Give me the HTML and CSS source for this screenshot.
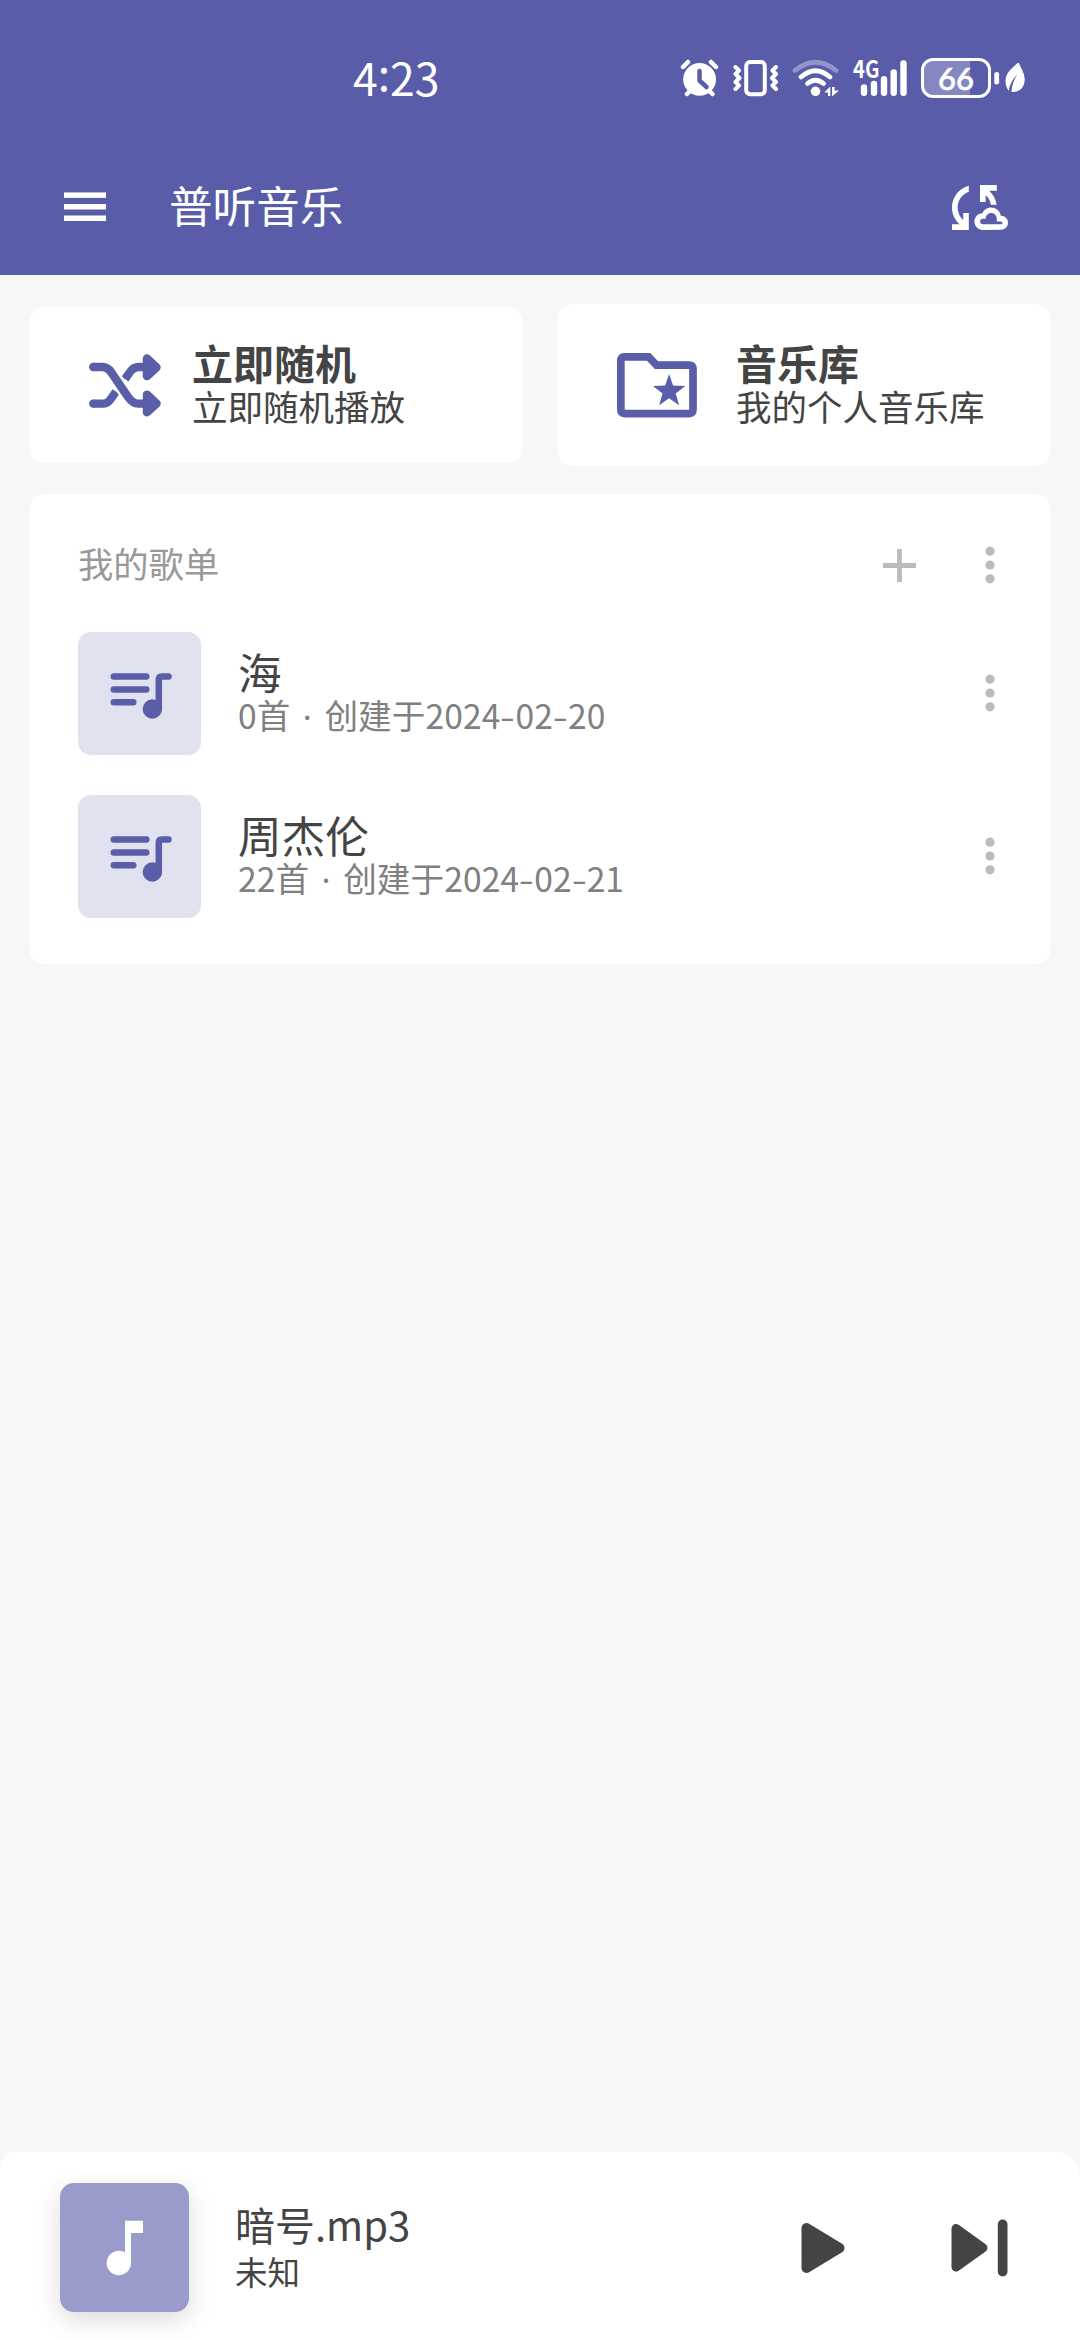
FILE: index.html
```html
<!DOCTYPE html>
<html lang="zh-CN">
<head>
<meta charset="utf-8">
<title>普听音乐</title>
<link rel="stylesheet" href="styles.css">
</head>
<body>
<div class="app">
  <header class="header">
    <div class="status">
      <span class="clock">4<span class="colon">:</span>23</span>
      <div class="indicators">
        <svg class="ind-alarm" width="40" height="44" viewBox="680 56 40 44">
          <circle cx="699.6" cy="79.3" r="16.4" fill="#fff"/>
          <path d="M683 67l5-5M716 67l-5-5M687 94l4-4M712.500 94l-4-4" stroke="#fff" stroke-width="4.500" stroke-linecap="round"/>
          <path d="M699.500 71v9.500l7 6.500" fill="none" stroke="#585ca9" stroke-width="4.500" stroke-linecap="round" stroke-linejoin="round"/>
        </svg>
        <svg class="ind-vibrate" width="46" height="44" viewBox="733 56 46 44">
          <rect x="746.200" y="62" width="18.600" height="32.200" rx="4" fill="none" stroke="#fff" stroke-width="4"/>
          <path d="M735.500 67l3.500 3.500-3.500 3.500 4 4-4 4 3.500 3.500-3.500 3.500M776 67l-3.500 3.500 3.500 3.500-4 4 4 4-3.500 3.500 3.500 3.500" fill="none" stroke="#fff" stroke-width="4" stroke-linecap="round" stroke-linejoin="round"/>
        </svg>
        <svg class="ind-wifi" width="48" height="44" viewBox="792 56 48 44">
          <g fill="none" stroke="#fff" stroke-width="4.800" stroke-linecap="round">
            <path d="M795 70.500Q815.500 54 836 70.500" opacity=".35"/>
            <path d="M801 77Q815.500 64.500 830 77"/>
            <path d="M807.500 83.500Q815.500 77 823.500 83.500"/>
          </g>
          <circle cx="815.500" cy="91.300" r="4.800" fill="#fff"/>
          <path d="M824.300 92.500l6-6v9.500h-2.300v-3.500zM832 87v9.500l7-6h-4.500v-3.500z" fill="#fff"/>
        </svg>
        <svg class="ind-signal" width="54" height="44" viewBox="853 56 54 44">
          <text class="net" x="853" y="77.500" textLength="26.500" lengthAdjust="spacingAndGlyphs">4G</text>
          <path d="M864 87.500v5.200M874 84v8.700M884 79.200v13.500M893.700 72.500v20.200M903.500 63.400v29.300" stroke="#fff" stroke-width="6.400" stroke-linecap="round"/>
        </svg>
        <div class="battery"><span class="battery-level"></span><span class="battery-text">66</span></div>
        <svg class="ind-leaf" width="32" height="44" viewBox="994 56 32 44">
          <rect x="994.300" y="72" width="4.800" height="12.500" rx="2.200" fill="#fff"/>
          <path d="M1018.500 62c-4 5-13 9.500-13 19 0 4.500 1.500 7.500 3.300 10 .5-6 4-11.500 8.200-16.500-3 5.500-5.500 11-5.500 17.500 8 .5 13.200-4.500 13.200-12.500 0-6.500-4-11.500-6.200-17.500z" fill="#fff"/>
        </svg>
      </div>
    </div>
    <div class="toolbar">
      <svg class="menu" width="42" height="30" viewBox="0 0 42 30" fill="#fff">
        <rect y=".4" width="42" height="5.500"/><rect y="12" width="42" height="5.500"/><rect y="23.500" width="42" height="5.500"/>
      </svg>
      <h1 class="title">普听音乐</h1>
      <svg class="sync" width="56" height="45" viewBox="4 4 20 16" fill="#fff">
        <path d="M21.500 14.980h-.05C21.200 13.300 19.760 12 18 12c-1.400 0-2.600.83-3.160 2.020C13.260 14.100 12 15.400 12 17c0 1.660 1.340 3 3 3l6.500-.02c1.380 0 2.500-1.120 2.500-2.500s-1.120-2.500-2.500-2.500zm0 3L15 18c-.55 0-1-.45-1-1s.45-1 1-1h1c0-1.100.9-2 2-2s2 .9 2 2v1h1.500c.28 0 .5.22.5.5s-.22.480-.5.480z"/>
        <path d="M10 4.260v2.090C7.670 7.180 6 9.390 6 12c0 1.770.78 3.340 2 4.440V14h2v6H4v-2h2.730C5.060 16.540 4 14.400 4 12c0-3.730 2.550-6.850 6-7.740zM20 6h-2.730c1.430 1.260 2.410 3.010 2.660 5h-2.020c-.23-1.360-.93-2.550-1.910-3.440V10h-2V4h6z"/>
      </svg>
    </div>
  </header>

  <main class="content">
    <div class="shortcuts">
      <section class="card shortcut shuffle">
        <svg class="shortcut-icon" width="72" height="63" viewBox="0 0 72 63">
          <g fill="none" stroke="#5a5da8" stroke-width="8.300">
            <path d="M4.200 49.600H14q4 0 6.500-3l6.500-9"/>
            <path d="M36 25l5.500-7.700q3.200-4.300 8-4.300h6"/>
            <path d="M22.500 18.500L39.500 43.500" stroke="#fff" stroke-width="13"/>
            <path d="M4.200 13H13.500q5 0 8.500 5L39.500 43.500q4.500 6.100 9.500 6.100h7"/>
          </g>
          <circle cx="4.200" cy="13" r="4.150" fill="#5a5da8"/><circle cx="4.200" cy="49.600" r="4.150" fill="#5a5da8"/>
          <path d="M58 4.600v17.500l9.500-8.700zM58 40.700v17.500l9.500-8.700z" fill="#5a5da8" stroke="#5a5da8" stroke-width="8.500" stroke-linejoin="round"/>
        </svg>
        <div class="labels"><h2>立即随机</h2><p>立即随机播放</p></div>
      </section>
      <section class="card shortcut library">
        <svg class="shortcut-icon" width="80" height="65" viewBox="0 0 80 65">
          <path d="M3.850 7.800q0-4 4-4h23.700l8 8.300H72q4 0 4 4V56.600q0 4-4 4H7.850q-4 0-4-4z" fill="none" stroke="#5a5da8" stroke-width="7.700"/>
          <path d="M52.100 21l4 11.500 12.200.400-9.600 7.500 3.400 11.800-10-6.900-10 6.900 3.400-11.800-9.600-7.500 12.200-.4z" fill="#5a5da8"/>
        </svg>
        <div class="labels"><h2>音乐库</h2><p>我的个人音乐库</p></div>
      </section>
    </div>

    <section class="card playlists">
      <div class="playlists-head">
        <h3>我的歌单</h3>
        <svg class="add" width="33" height="33" viewBox="0 0 33 33"><path d="M0 16.500h33M16.500 0v33" stroke="#bbb" stroke-width="4.800"/></svg>
        <svg class="more" width="10" height="38" viewBox="0 0 10 38" fill="#bbb"><circle cx="5" cy="5.200" r="4.600"/><circle cx="5" cy="19" r="4.600"/><circle cx="5" cy="32.800" r="4.600"/></svg>
      </div>
      <div class="row">
        <div class="cover"><svg width="62" height="48" viewBox="0 0 62 48"><path d="M3.800 4.500h32.500M3.800 17.500h32.500M3.800 30.300h19.500M58.500 4.500H52q-3.200 0-3.200 3.200V37" fill="none" stroke="#5a5da8" stroke-width="6.500" stroke-linecap="round"/><circle cx="42.300" cy="37" r="9.700" fill="#5a5da8"/></svg></div>
        <div class="labels"><h4>海</h4><p>0首<span class="dot">·</span>创建于2024<span class="dash">-</span>02<span class="dash">-</span>20</p></div>
        <svg class="more" width="10" height="38" viewBox="0 0 10 38" fill="#bbb"><circle cx="5" cy="5.200" r="4.600"/><circle cx="5" cy="19" r="4.600"/><circle cx="5" cy="32.800" r="4.600"/></svg>
      </div>
      <div class="row">
        <div class="cover"><svg width="62" height="48" viewBox="0 0 62 48"><path d="M3.800 4.500h32.500M3.800 17.500h32.500M3.800 30.300h19.500M58.500 4.500H52q-3.200 0-3.200 3.200V37" fill="none" stroke="#5a5da8" stroke-width="6.500" stroke-linecap="round"/><circle cx="42.300" cy="37" r="9.700" fill="#5a5da8"/></svg></div>
        <div class="labels"><h4>周杰伦</h4><p>22首<span class="dot">·</span>创建于2024<span class="dash">-</span>02<span class="dash">-</span>21</p></div>
        <svg class="more" width="10" height="38" viewBox="0 0 10 38" fill="#bbb"><circle cx="5" cy="5.200" r="4.600"/><circle cx="5" cy="19" r="4.600"/><circle cx="5" cy="32.800" r="4.600"/></svg>
      </div>
    </section>
  </main>

  <footer class="player">
    <div class="art"><svg width="129" height="129" viewBox="0 0 129 129"><path d="M65 37.700h18V50H71v30a12.200 12.200 0 1 1-6-10.500z" fill="#fff"/></svg></div>
    <div class="labels"><h4>暗号.mp3</h4><p>未知</p></div>
    <svg class="play" width="44" height="52" viewBox="0 0 44 52"><path d="M5.500 6v40L38.500 26z" fill="#444" stroke="#444" stroke-width="10" stroke-linejoin="round"/></svg>
    <svg class="next" width="57" height="58" viewBox="0 0 57 58"><path d="M5 9.500v38.500L32 28.800z" fill="#444" stroke="#444" stroke-width="9" stroke-linejoin="round"/><rect x="46.800" y=".5" width="9.700" height="57" rx="4.800" fill="#444"/></svg>
  </footer>
</div>
</body>
</html>
```
FILE: styles.css
```css
* { box-sizing: border-box; margin: 0; padding: 0; }
body { font-family: "Noto Sans CJK SC", sans-serif; background: #f7f7f7; color: #444; }
svg { display: block; flex: none; }
.app { width: 1080px; height: 2340px; display: flex; flex-direction: column; background: #f7f7f7; }
.header { height: 275px; background: #585ca9; color: #fff; flex: none; }
.status { height: 156px; display: flex; align-items: center; padding: 0 54px 0 353px; }
.clock { font-size: 44.500px; line-height: 60px; padding-bottom: 3px; }
.colon { vertical-align: 5px; line-height: 0; }
.indicators { display: flex; align-items: center; margin-left: auto; }
.ind-vibrate { margin-left: 13px; }
.ind-wifi { margin-left: 13px; }
.ind-signal { margin-left: 13px; overflow: visible; }
.net { font: bold 24px "Noto Sans CJK SC", sans-serif; fill: #fff; }
.battery { width: 70px; height: 40px; margin-left: 14px; border: 3px solid #fff; border-radius: 12px; position: relative; display: flex; align-items: center; justify-content: center; overflow: hidden; }
.battery-level { position: absolute; left: 0; top: 0; width: 46px; height: 34px; background: rgba(255,255,255,.27); }
.battery-text { position: relative; font: 500 31px/34px Lato, sans-serif; -webkit-text-stroke: .6px #fff; }
.ind-leaf { margin-left: 3px; }
.toolbar { display: flex; align-items: center; height: 102px; padding: 0 72px 0 63.500px; }
.title { font-size: 43.600px; font-weight: 400; line-height: 60px; margin-left: 63.500px; padding-bottom: 6px; }
.sync { margin-left: auto; }
.content { flex: 1; padding: 29px 30px 0; }
.shortcuts { display: flex; align-items: center; gap: 36px; }
.card { background: #fff; border-radius: 14px; }
.shortcut { flex: 1; display: flex; align-items: center; }
.shuffle { height: 156px; padding-left: 59px; }
.library { height: 162px; padding-left: 59px; }
.labels { white-space: nowrap; }
.shortcut .labels { padding-bottom: 4px; }
.shuffle .labels { margin-left: 31px; }
.library .labels { margin-left: 39px; }
.shortcut h2 { font-size: 41px; line-height: 44px; font-weight: 700; }
.shortcut p { font-size: 35.500px; line-height: 43px; }
.playlists { margin-top: 27.500px; height: 470px; padding: 0 55px 0 48px; }
.playlists-head { height: 138px; display: flex; align-items: center; padding-top: 5px; }
.playlists-head h3 { font-size: 35.300px; line-height: 50px; font-weight: 400; color: #999; padding-bottom: 4px; }
.add { margin-left: auto; margin-right: 69px; }
.row { display: flex; align-items: center; height: 123px; margin-bottom: 40px; }
.row .more { margin-left: auto; }
.cover { width: 123px; height: 123px; border-radius: 13px; background: #e0e2ef; padding: 40.500px 0 0 32px; }
.row .labels { margin-left: 37px; padding-bottom: 1px; }
.row h4 { font-size: 43.600px; line-height: 46px; font-weight: 400; }
.row p { font-size: 33.600px; line-height: 42px; color: #808080; letter-spacing: .1px; }
.dot { display: inline-block; width: 34px; text-align: center; font-family: "Noto Sans", sans-serif; }
.dash { display: inline-block; width: 15px; text-align: center; transform: scaleX(1.300); }
.player { height: 188px; flex: none; background: #fff; border-radius: 15px 24px 0 0; display: flex; align-items: center; padding: 3px 72px 0 60px; }
.art { width: 129px; height: 129px; border-radius: 14px; background: #9a9bcb; box-shadow: 0 8px 24px rgba(0,0,0,.14); }
.player .labels { margin-left: 46px; padding-bottom: 3px; }
.player h4 { font-size: 40px; line-height: 50px; font-weight: 400; }
.player p { font-size: 32.500px; line-height: 44px; }
.play { margin-left: auto; margin-right: 106px; }
```
